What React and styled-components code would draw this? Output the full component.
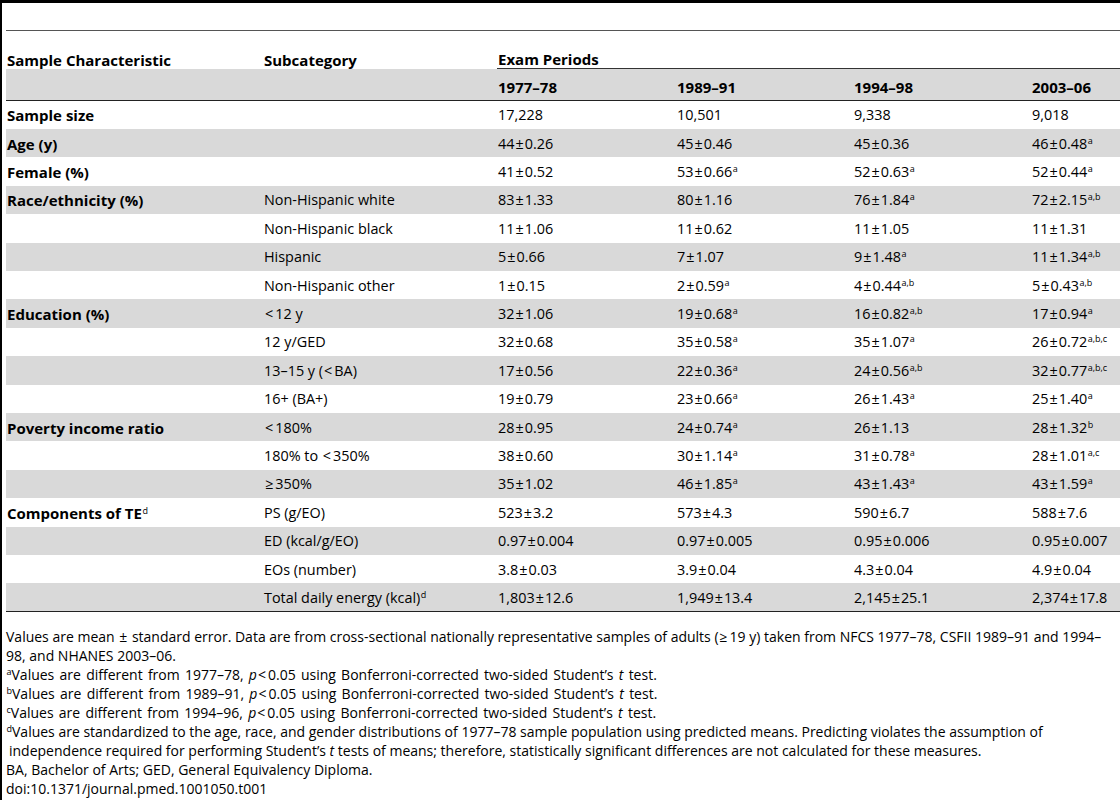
import React from 'react';
import styled, { createGlobalStyle } from 'styled-components';

const Global = createGlobalStyle`
  html, body { margin: 0; padding: 0; background: #fff; }
  body { font-family: "Open Sans", "Liberation Sans", sans-serif; color: #000; }
`;

const Page = styled.div`
  width: 1120px;
  height: 800px;
  box-sizing: border-box;
  border-left: 2px solid #000;
  border-top: 3px solid #000;
  padding: 27px 0 0 4px;
  overflow: hidden;
`;

const Table = styled.table`
  border-collapse: collapse;
  table-layout: fixed;
  width: 1114px;
  font-size: 14.4px;
  border-top: 1px solid #555;
  border-bottom: 1px solid #222;
`;

const HeadRow = styled.tr`
  height: 38px;
`;

const HeadCell = styled.th`
  text-align: left;
  font-weight: 700;
  font-size: 15px;
  vertical-align: bottom;
  padding: 0 0 0 1px;
  line-height: 18px;
  white-space: nowrap;
  border-bottom: ${(p) => (p.$rule ? '1px solid #333' : 'none')};
`;

const PeriodRow = styled.tr`
  height: 32px;
  background: #d9d9d9;
  border-bottom: 1px solid #222;
`;

const PeriodCell = styled.th`
  text-align: left;
  font-weight: 700;
  font-size: 15px;
  vertical-align: middle;
  padding: 5px 0 0 1px;
  line-height: 18px;
`;

const BodyRow = styled.tr`
  height: 28.42px;
  background: ${(p) => (p.$shade ? '#d9d9d9' : '#fff')};
`;

const Cell = styled.td`
  padding: 1px 0 0 1px;
  vertical-align: middle;
  line-height: 18px;
  white-space: nowrap;
  font-weight: ${(p) => (p.$strong ? 700 : 400)};
  font-size: ${(p) => (p.$strong ? '15px' : '14.4px')};
`;

const Sup = styled.sup`
  font-size: 9px;
  font-weight: 400;
  line-height: 0;
  vertical-align: 5px;
  margin-left: 0.5px;
`;

const Pm = styled.span`
  margin: 0 1px;
`;

const Sym = styled.span`
  margin: 0 2px 0 1px;
`;

const Notes = styled.div`
  margin-top: 16px;
  font-size: 14px;
  line-height: 18.9px;
  width: 1114px;
`;

const Note = styled.p`
  margin: 0;
  padding-left: ${(p) => (p.$hang ? '3px' : '0')};
  text-indent: ${(p) => (p.$hang ? '-3px' : '0')};
  word-spacing: ${(p) => (p.$loose ? '1.6px' : '0')};
`;

const Em = styled.i`
  font-style: italic;
`;

const cols = [257, 234, 179, 177, 178, 89];

const rows = [
  ['Sample size', '', '17,228', '10,501', '9,338', '9,018'],
  ['Age (y)', '', '44±0.26', '45±0.46', '45±0.36', ['46±0.48', 'a']],
  ['Female (%)', '', '41±0.52', ['53±0.66', 'a'], ['52±0.63', 'a'], ['52±0.44', 'a']],
  ['Race/ethnicity (%)', 'Non-Hispanic white', '83±1.33', '80±1.16', ['76±1.84', 'a'], ['72±2.15', 'a,b']],
  ['', 'Non-Hispanic black', '11±1.06', '11±0.62', '11±1.05', '11±1.31'],
  ['', 'Hispanic', '5±0.66', '7±1.07', ['9±1.48', 'a'], ['11±1.34', 'a,b']],
  ['', 'Non-Hispanic other', '1±0.15', ['2±0.59', 'a'], ['4±0.44', 'a,b'], ['5±0.43', 'a,b']],
  ['Education (%)', '<12 y', '32±1.06', ['19±0.68', 'a'], ['16±0.82', 'a,b'], ['17±0.94', 'a']],
  ['', '12 y/GED', '32±0.68', ['35±0.58', 'a'], ['35±1.07', 'a'], ['26±0.72', 'a,b,c']],
  ['', '13–15 y (<BA)', '17±0.56', ['22±0.36', 'a'], ['24±0.56', 'a,b'], ['32±0.77', 'a,b,c']],
  ['', '16+ (BA+)', '19±0.79', ['23±0.66', 'a'], ['26±1.43', 'a'], ['25±1.40', 'a']],
  ['Poverty income ratio', '<180%', '28±0.95', ['24±0.74', 'a'], '26±1.13', ['28±1.32', 'b']],
  ['', '180% to <350%', '38±0.60', ['30±1.14', 'a'], ['31±0.78', 'a'], ['28±1.01', 'a,c']],
  ['', '≥350%', '35±1.02', ['46±1.85', 'a'], ['43±1.43', 'a'], ['43±1.59', 'a']],
  [['Components of TE', 'd'], 'PS (g/EO)', '523±3.2', '573±4.3', '590±6.7', '588±7.6'],
  ['', 'ED (kcal/g/EO)', '0.97±0.004', '0.97±0.005', '0.95±0.006', '0.95±0.007'],
  ['', 'EOs (number)', '3.8±0.03', '3.9±0.04', '4.3±0.04', '4.9±0.04'],
  ['', ['Total daily energy (kcal)', 'd'], '1,803±12.6', '1,949±13.4', '2,145±25.1', '2,374±17.8'],
];

function Text({ s }) {
  const parts = s.split(/([±<≥])/);
  return (
    <>
      {parts.map((p, i) => {
        if (p === '±') return <Pm key={i}>±</Pm>;
        if (p === '<' || p === '≥') return <Sym key={i}>{p}</Sym>;
        return <React.Fragment key={i}>{p}</React.Fragment>;
      })}
    </>
  );
}

function Value({ v }) {
  if (Array.isArray(v)) {
    return (
      <>
        <Text s={v[0]} />
        <Sup>{v[1]}</Sup>
      </>
    );
  }
  return <Text s={v} />;
}

export default function App() {
  return (
    <>
      <Global />
      <Page>
        <Table>
          <colgroup>
            {cols.map((w, i) => (
              <col key={i} style={{ width: w }} />
            ))}
          </colgroup>
          <thead>
            <HeadRow>
              <HeadCell>Sample Characteristic</HeadCell>
              <HeadCell>Subcategory</HeadCell>
              <HeadCell colSpan={4} $rule>
                Exam Periods
              </HeadCell>
            </HeadRow>
            <PeriodRow>
              <PeriodCell />
              <PeriodCell />
              <PeriodCell>1977–78</PeriodCell>
              <PeriodCell>1989–91</PeriodCell>
              <PeriodCell>1994–98</PeriodCell>
              <PeriodCell>2003–06</PeriodCell>
            </PeriodRow>
          </thead>
          <tbody>
            {rows.map((r, i) => (
              <BodyRow key={i} $shade={i % 2 === 1}>
                {r.map((v, j) => (
                  <Cell key={j} $strong={j === 0}>
                    <Value v={v} />
                  </Cell>
                ))}
              </BodyRow>
            ))}
          </tbody>
        </Table>
        <Notes>
          <Note>
            Values are mean <Pm>±</Pm> standard error. Data are from cross-sectional nationally representative samples of adults (<Sym>≥</Sym>19 y) taken from NFCS 1977–78, CSFII 1989–91 and 1994–<wbr />98, and NHANES 2003–06.
          </Note>
          <Note $hang $loose>
            <Sup>a</Sup>Values are different from 1977–78, <Em>p</Em><Sym>&lt;</Sym>0.05 using Bonferroni-corrected two-sided Student’s <Em>t</Em> test.
          </Note>
          <Note $hang $loose>
            <Sup>b</Sup>Values are different from 1989–91, <Em>p</Em><Sym>&lt;</Sym>0.05 using Bonferroni-corrected two-sided Student’s <Em>t</Em> test.
          </Note>
          <Note $hang $loose>
            <Sup>c</Sup>Values are different from 1994–96, <Em>p</Em><Sym>&lt;</Sym>0.05 using Bonferroni-corrected two-sided Student’s <Em>t</Em> test.
          </Note>
          <Note $hang>
            <Sup>d</Sup>Values are standardized to the age, race, and gender distributions of 1977–78 sample population using predicted means. Predicting violates the assumption of independence required for performing Student’s <Em>t</Em> tests of means; therefore, statistically significant differences are not calculated for these measures.
          </Note>
          <Note>BA, Bachelor of Arts; GED, General Equivalency Diploma.</Note>
          <Note>doi:10.1371/journal.pmed.1001050.t001</Note>
        </Notes>
      </Page>
    </>
  );
}
